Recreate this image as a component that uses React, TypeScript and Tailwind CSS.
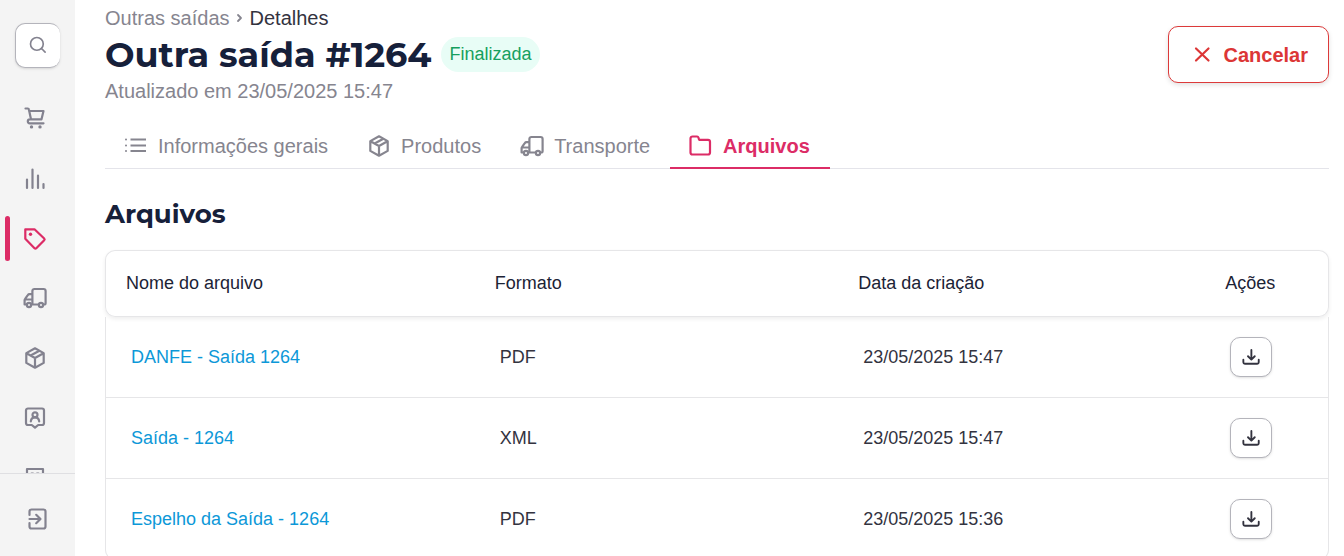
import type { ReactNode } from 'react';

type IconProps = { className?: string; children?: ReactNode };

function Icon({ className = 'size-6', children }: IconProps) {
  return (
    <svg
      className={className}
      viewBox="0 0 24 24"
      fill="none"
      stroke="currentColor"
      strokeWidth="2.2"
      strokeLinecap="round"
      strokeLinejoin="round"
      aria-hidden="true"
    >
      {children}
    </svg>
  );
}

const SearchIcon = () => (
  <Icon className="mb-0.5 size-[18px]">
    <circle cx="10.5" cy="10.5" r="8.5" />
    <path d="M17 17l4.5 4.5" />
  </Icon>
);

const CartIcon = () => (
  <Icon>
    <path d="M2.5 2.5h2.3c.6 0 1 .3 1.100.9L8 13.300M6 5h14.500l-2 8.300H6.800a2 2 0 0 0 0 4H20.500" />
    <circle cx="8.500" cy="20.900" r="1.700" fill="currentColor" stroke="none" />
    <circle cx="17" cy="20.900" r="1.700" fill="currentColor" stroke="none" />
  </Icon>
);

const ChartIcon = () => (
  <Icon className="mt-0.5 size-6">
    <path d="M4 12.500v8.500M9.500 2.500v18.500M15 8.500v12.500M20.500 17v4" />
  </Icon>
);

const TagIcon = () => (
  <Icon className="mt-px size-6">
    <path d="M2.300 2.300h9.200l9.700 9.200a1.300 1.300 0 0 1 0 1.800l-7.900 7.900a1.300 1.300 0 0 1-1.800 0L2.300 11.800z" />
    <circle cx="7.500" cy="7.200" r="1.700" fill="currentColor" stroke="none" />
  </Icon>
);

const TruckIcon = () => (
  <Icon>
    <path d="M8.600 18.500h7.300M20 18.500h1a1.600 1.600 0 0 0 1.600-1.600V5a2 2 0 0 0-2-2h-9.200a2 2 0 0 0-2 2v13.500M9.400 8.200H6.500c-.7 0-1.300.3-1.700.9l-2.700 3.800c-.3.4-.5.9-.5 1.400v4.200h2.300M2 13.500h7.400" />
    <circle cx="6" cy="19" r="2.100" />
    <circle cx="18" cy="19" r="2.100" />
  </Icon>
);

const BoxIcon = () => (
  <Icon>
    <path d="M12 2.300l8.700 4.800v9.800L12 21.700l-8.700-4.800V7.100zM3.500 7.200L12 12l8.500-4.800M12 12v9.500M7.700 9.500l8.600-4.800" />
  </Icon>
);

const ContactIcon = () => (
  <Icon>
    <path d="M5 2.500h14a2 2 0 0 1 2 2v12.500a2 2 0 0 1-2 2h-3.800L12 21.700 8.800 19H5a2 2 0 0 1-2-2V4.500a2 2 0 0 1 2-2z" />
    <circle cx="12" cy="8.800" r="2.500" />
    <path d="M7.800 15.300c.3-2.500 1.900-4 4.200-4s3.900 1.500 4.200 4" />
  </Icon>
);

const BuildingIcon = () => (
  <Icon>
    <path d="M4 21.500V3h16v18.500M8.500 7.500h1.500M14 7.500h1.500M8.500 12h1.500M14 12h1.500M2 21.500h20M10 21.500V17h4v4.500" />
  </Icon>
);

const LogoutIcon = () => (
  <Icon>
    <path d="M4.500 8V4.500a2 2 0 0 1 2-2h12a2 2 0 0 1 2 2v15a2 2 0 0 1-2 2h-12a2 2 0 0 1-2-2V16M4.500 12h10.700M11.200 7.800l4.300 4.200-4.300 4.200" />
  </Icon>
);

const ListIcon = () => (
  <Icon>
    <path d="M6.500 5.500h15.500M6.500 11.500h15.500M6.500 17h15.500" strokeLinecap="butt" strokeWidth="2" />
    <path d="M2 5.500h.01M2 11.500h.01M2 17h.01" strokeWidth="2" />
  </Icon>
);

const FolderIcon = () => (
  <Icon>
    <path d="M3.500 2.500h4.600c.6 0 1.100.4 1.300 1l.7 2.300H19a2 2 0 0 1 2 2V18.500a2 2 0 0 1-2 2H3.500a2 2 0 0 1-2-2v-14a2 2 0 0 1 2-2z" />
  </Icon>
);

const DownloadIcon = () => (
  <Icon className="size-[18px]">
    <path
      d="M12.500 2.500v12.500M8 11l4.500 4.500L17 11M1.800 15.500V19a2 2 0 0 0 2 2h16.500a2 2 0 0 0 2-2v-3.500"
      strokeWidth="2.500"
    />
  </Icon>
);

const navItems = [
  { label: 'Compras', icon: <CartIcon /> },
  { label: 'Relatórios', icon: <ChartIcon /> },
  { label: 'Vendas', icon: <TagIcon />, active: true },
  { label: 'Transporte', icon: <TruckIcon /> },
  { label: 'Produtos', icon: <BoxIcon /> },
  { label: 'Contatos', icon: <ContactIcon /> },
  { label: 'Empresa', icon: <BuildingIcon /> },
];

const tabs = [
  { label: 'Informações gerais', icon: <ListIcon /> },
  { label: 'Produtos', icon: <BoxIcon /> },
  { label: 'Transporte', icon: <TruckIcon /> },
  { label: 'Arquivos', icon: <FolderIcon />, active: true },
];

const files = [
  { name: 'DANFE - Saída 1264', format: 'PDF', date: '23/05/2025 15:47' },
  { name: 'Saída - 1264', format: 'XML', date: '23/05/2025 15:47' },
  { name: 'Espelho da Saída - 1264', format: 'PDF', date: '23/05/2025 15:36' },
];

function Sidebar() {
  return (
    <aside className="flex w-[75px] shrink-0 flex-col bg-[#f4f4f4] text-[#83828f]">
      <button
        type="button"
        aria-label="Buscar"
        className="mt-[23px] ml-[15px] flex size-[45px] shrink-0 items-center justify-center rounded-[10px] border border-r-0 border-[#b4b4bb] bg-white shadow-sm"
      >
        <SearchIcon />
      </button>
      <nav className="mt-5 min-h-0 flex-1 overflow-hidden">
        {navItems.map((item) => (
          <a
            key={item.label}
            href="#"
            aria-label={item.label}
            className={
              item.active
                ? 'flex h-[60px] items-center pl-[5px] text-[#dc2c66]'
                : 'flex h-[60px] items-center pl-[5px]'
            }
          >
            <span
              className={
                item.active ? 'h-[45px] w-[5px] rounded-sm bg-[#dc2c66]' : 'h-[45px] w-[5px]'
              }
            />
            <span className="ml-[13px]">{item.icon}</span>
          </a>
        ))}
      </nav>
      <div className="flex h-[83px] shrink-0 items-center border-t border-[#dfdfe2] pt-2 pl-[25px]">
        <button type="button" aria-label="Sair">
          <LogoutIcon />
        </button>
      </div>
    </aside>
  );
}

function FilesTable() {
  return (
    <table className="mt-[19px] w-full table-fixed border-separate border-spacing-0 text-left text-lg">
      <colgroup>
        <col className="w-[30.2%]" />
        <col className="w-[29.7%]" />
        <col className="w-[30%]" />
        <col />
      </colgroup>
      <thead className="rounded-[10px] text-[#1c2336] shadow-[0_2px_4px_rgba(0,0,0,0.07)]">
        <tr className="h-[67px] *:border-y *:border-[#e6e6e8] *:px-5 *:pb-0.5 *:font-normal">
          <th className="rounded-l-[10px] border-l">Nome do arquivo</th>
          <th>Formato</th>
          <th>Data da criação</th>
          <th className="rounded-r-[10px] border-r">Ações</th>
        </tr>
      </thead>
      <tbody className="text-[#33333f]">
        {files.map((file) => (
          <tr
            key={file.name}
            className="h-[81px] *:border-b *:border-[#e6e6e8] *:px-[25px] last:*:first:rounded-bl-[10px] last:*:last:rounded-br-[10px]"
          >
            <td className="border-l">
              <a href="#" className="text-[#0c98d8]">
                {file.name}
              </a>
            </td>
            <td>{file.format}</td>
            <td>{file.date}</td>
            <td className="border-r">
              <button
                type="button"
                aria-label={`Baixar ${file.name}`}
                className="flex h-10 w-[42px] items-center justify-center rounded-[10px] border border-[#b4b4bb] bg-white shadow-sm"
              >
                <DownloadIcon />
              </button>
            </td>
          </tr>
        ))}
      </tbody>
    </table>
  );
}

export default function App() {
  return (
    <div className="flex h-screen overflow-hidden bg-white font-['Liberation_Sans',Arial,sans-serif]">
      <Sidebar />
      <main className="min-w-0 flex-1 overflow-y-auto pr-[15px] pb-8 pl-[30px] [scrollbar-width:none]">
        <header className="flex items-start justify-between">
          <div className="pt-1">
            <nav className="flex items-center text-xl text-[#86858f]" aria-label="Trilha">
              <a href="#">Outras saídas</a>
              <svg
                className="mx-[6px] h-[10px] w-2"
                viewBox="0 0 8 10"
                fill="none"
                stroke="currentColor"
                strokeWidth="1.8"
                strokeLinecap="round"
                strokeLinejoin="round"
                aria-hidden="true"
              >
                <path d="M2 2l3 3-3 3" />
              </svg>
              <span className="text-[#33333f]">Detalhes</span>
            </nav>
            <div className="flex items-center gap-[10px]">
              <h1 className="font-[Montserrat,sans-serif] text-[35px] leading-[45px] font-bold text-[#16203a]">
                Outra saída #1264
              </h1>
              <span className="rounded-full bg-[#e8fdf6] px-2 py-1 text-lg leading-[27px] text-[#15a05e]">
                Finalizada
              </span>
            </div>
            <p className="text-xl text-[#86858f]">Atualizado em 23/05/2025 15:47</p>
          </div>
          <button
            type="button"
            className="mt-[26px] flex h-[57px] items-center gap-[11px] rounded-[10px] border border-[#dc3a3a] bg-white px-5 text-xl font-bold text-[#dc3636] shadow-[0_2px_5px_rgba(0,0,0,0.12)]"
          >
            <Icon>
              <path d="M7 5.500l12.500 12M19.500 5.500l-12.500 12" />
            </Icon>
            Cancelar
          </button>
        </header>

        <div className="mt-[19px] flex border-b border-[#e4e4ea]" role="tablist">
          {tabs.map((tab) => (
            <button
              key={tab.label}
              type="button"
              role="tab"
              aria-selected={!!tab.active}
              className={
                tab.active
                  ? '-mb-px flex h-[45px] items-center gap-[10px] border-b-2 border-[#dc2c66] pr-5 pl-[19px] text-xl font-bold text-[#dc2c66]'
                  : '-mb-px flex h-[45px] items-center gap-[10px] border-b-2 border-transparent pr-5 pl-[19px] text-xl text-[#86858f]'
              }
            >
              {tab.icon}
              {tab.label}
            </button>
          ))}
        </div>

        <h2 className="mt-7 font-[Montserrat,sans-serif] text-[26px] leading-[34px] font-bold text-[#16203a]">
          Arquivos
        </h2>
        <FilesTable />
      </main>
    </div>
  );
}
